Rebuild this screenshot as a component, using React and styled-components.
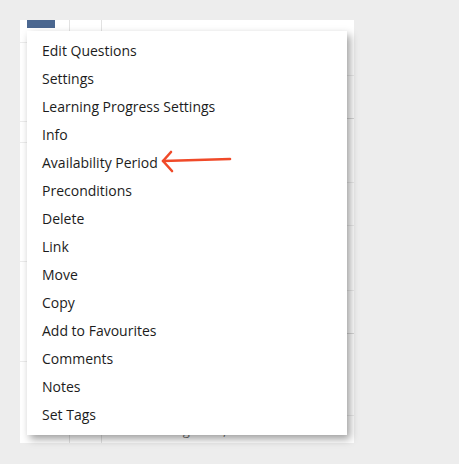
import styled, { createGlobalStyle } from 'styled-components';

const GlobalStyle = createGlobalStyle`
  html, body {
    margin: 0;
    background: #ededed;
    font-family: "Open Sans", "Liberation Sans", sans-serif;
  }
`;

const Page = styled.div`
  position: relative;
  width: 459px;
  height: 464px;
  padding: 20px 0 0 20px;
  box-sizing: border-box;
  overflow: hidden;
`;

const Panel = styled.div`
  width: 334px;
  height: 423px;
  background: #fff;
  display: grid;
  grid-template-columns: 50px 32px 1fr;
`;

const Column = styled.div`
  display: flex;
  flex-direction: column;
  border-right: ${({ $last }) => ($last ? 'none' : '1px solid #e2e2e2')};
  box-sizing: border-box;
`;

const Row = styled.div`
  height: ${({ $h }) => $h}px;
  flex-shrink: 0;
  box-sizing: border-box;
  border-bottom: 1px solid ${({ $strong }) => ($strong ? '#d9d9d9' : '#ececec')};
`;

const Fill = styled.div`
  flex: 1;
  display: flex;
  align-items: flex-end;
  padding: 0 0 4px 15px;
`;

const TabMark = styled.div`
  margin-left: 7px;
  width: 28px;
  height: 8px;
  background: #4b6790;
`;

const DateLine = styled.div`
  font-size: 13px;
  color: #6f6f6f;
  white-space: nowrap;
`;

const Menu = styled.ul`
  position: absolute;
  left: 27px;
  top: 31px;
  width: 320px;
  margin: 0;
  padding: 6px 0;
  list-style: none;
  background: #fff;
  box-shadow: 3px 4px 8px rgba(0, 0, 0, 0.38);
`;

const MenuItem = styled.li`
  height: 28px;
  line-height: 28px;
  padding-left: 15px;
  font-size: 14px;
  color: #1c1c1c;
`;

const Arrow = styled.svg`
  position: absolute;
  left: 160px;
  top: 148px;
  overflow: visible;
`;

const items = [
  'Edit Questions',
  'Settings',
  'Learning Progress Settings',
  'Info',
  'Availability Period',
  'Preconditions',
  'Delete',
  'Link',
  'Move',
  'Copy',
  'Add to Favourites',
  'Comments',
  'Notes',
  'Set Tags',
];

export default function App() {
  return (
    <>
      <GlobalStyle />
      <Page>
        <Panel>
          <Column>
            <Row $h={23}>
              <TabMark />
            </Row>
            <Row $h={79} />
            <Row $h={21} />
            <Row $h={119} />
            <Row $h={100} />
          </Column>
          <Column />
          <Column $last>
            <Row $h={56} />
            <Row $h={43} $strong />
            <Row $h={64} />
            <Row $h={43} />
            <Row $h={65} />
            <Row $h={43} $strong />
            <Row $h={82} />
            <Fill>
              <DateLine>Date: 3. Aug 2023, 09:03</DateLine>
            </Fill>
          </Column>
        </Panel>

        <Menu>
          {items.map((label) => (
            <MenuItem key={label}>{label}</MenuItem>
          ))}
        </Menu>

        <Arrow width="74" height="26" viewBox="0 0 74 26">
          <g fill="none" stroke="#f04a29" strokeWidth="2.6" strokeLinecap="round" strokeLinejoin="round">
            <path d="M70 11 L3 13" />
            <path d="M11 4 L3 13 L12 23" />
          </g>
        </Arrow>
      </Page>
    </>
  );
}
